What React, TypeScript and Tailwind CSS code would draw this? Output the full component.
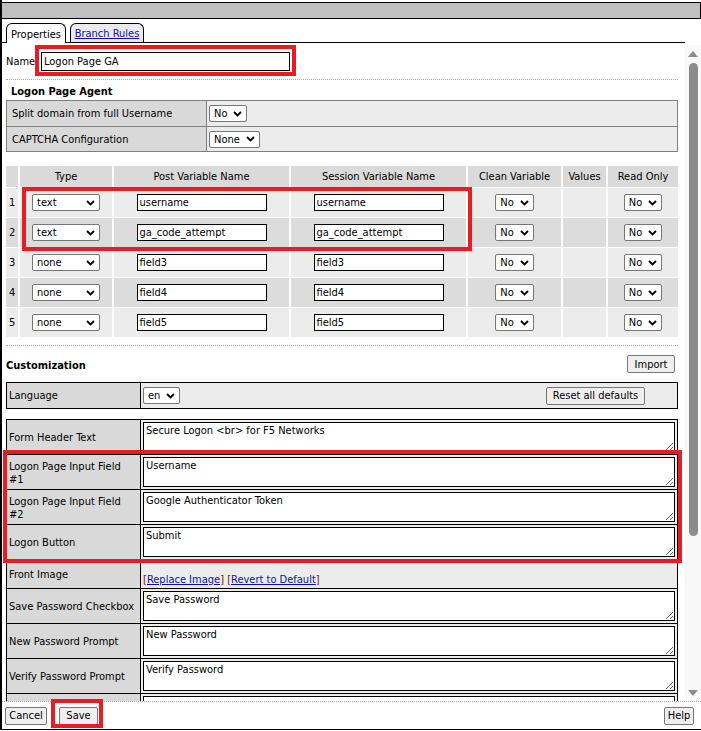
import React from 'react';

const Chevron = () => (
  <svg width="9" height="6" viewBox="0 0 9 6" className="shrink-0">
    <path d="M1 1 L4.5 4.5 L8 1" fill="none" stroke="#000" strokeWidth="1.8" />
  </svg>
);

function FakeSelect({ value, width = '' }: { value: string; width?: string }) {
  return (
    <div
      className={`flex h-[17px] items-center justify-between gap-[6px] rounded-[2px] border border-[#767676] bg-white pl-[4px] pr-[4px] ${width}`}
    >
      <span className="leading-none">{value}</span>
      <Chevron />
    </div>
  );
}

function Btn({ children, className = '' }: { children: React.ReactNode; className?: string }) {
  return (
    <button
      className={`flex h-[18px] items-center justify-center rounded-[2px] border border-[#767676] bg-[#efefef] leading-none ${className}`}
    >
      {children}
    </button>
  );
}

function TextBox({ value, width }: { value: string; width: string }) {
  return (
    <div className={`flex h-[17px] items-center border border-black bg-white px-[2px] ${width}`}>{value}</div>
  );
}

const varRows = [
  { type: 'text', post: 'username', session: 'username' },
  { type: 'text', post: 'ga_code_attempt', session: 'ga_code_attempt' },
  { type: 'none', post: 'field3', session: 'field3' },
  { type: 'none', post: 'field4', session: 'field4' },
  { type: 'none', post: 'field5', session: 'field5' },
];

const headers = ['', 'Type', 'Post Variable Name', 'Session Variable Name', 'Clean Variable', 'Values', 'Read Only'];

type CustRow = { label: React.ReactNode; value?: string; front?: boolean; h: string };

// last row is scrolled out of view, only its top edge shows
const custRows: CustRow[] = [
  { label: 'Form Header Text', value: 'Secure Logon <br> for F5 Networks', h: 'h-[35px]' },
  { label: <>Logon Page Input Field<br />#1</>, value: 'Username', h: 'h-[35px]' },
  { label: <>Logon Page Input Field<br />#2</>, value: 'Google Authenticator Token', h: 'h-[35px]' },
  { label: 'Logon Button', value: 'Submit', h: 'h-[35px]' },
  { label: 'Front Image', front: true, h: 'h-[29px]' },
  { label: 'Save Password Checkbox', value: 'Save Password', h: 'h-[35px]' },
  { label: 'New Password Prompt', value: 'New Password', h: 'h-[35px]' },
  { label: 'Verify Password Prompt', value: 'Verify Password', h: 'h-[35px]' },
  { label: '', value: '', h: 'h-[35px]' },
];

export default function App() {
  return (
    <div className="relative h-[730px] w-[701px] overflow-hidden border-b border-l-2 border-black bg-white text-[11px] leading-[13px] text-black [font-family:'DejaVu_Sans_Condensed','Liberation_Sans',sans-serif]">
      {/* title bar */}
      <div className="mt-[2px] h-[17px] border-y border-r border-black bg-[#c0c0c0]" />

      <div className="flex h-[682px]">
        <div className="flex w-[683px] flex-col">
          {/* tabs */}
          <div className="flex h-[24px] items-end border-b border-black pl-[4px]">
            <div className="-mb-px flex h-[20px] w-[60px] items-center justify-center rounded-t-[6px] border border-b-0 border-black bg-white pt-[1px]">
              Properties
            </div>
            <div className="ml-[4px] flex h-[19px] w-[74px] items-center justify-center rounded-t-[6px] border border-b-0 border-black bg-[#ebebeb] pt-[1px]">
              <span className="text-[#1010b0] underline">Branch Rules</span>
            </div>
          </div>

          <div className="h-[658px] overflow-hidden pl-[4px] pr-[7px]">
            {/* name */}
            <div className="mt-[2px] flex h-[31px] items-center">
              <span className="w-[29px] pt-[1px]">Name</span>
              <div className="flex h-[31px] w-[261px] items-center border-4 border-[#e81c24] px-[2px] pt-[1px]">
                <div className="flex h-[19px] w-full items-center border border-black bg-white px-[2px]">
                  Logon Page GA
                </div>
              </div>
            </div>

            <div className="mt-[3px] border-t border-dotted border-[#a8a8a8]" />
            <div className="flex h-[20px] items-center pl-[5px] pt-[2px] font-bold">Logon Page Agent</div>

            {/* agent settings */}
            <div className="border-x border-t border-[#808080]">
              <div className="grid h-[26px] grid-cols-[200px_1fr] border-b border-[#808080]">
                <div className="flex items-center border-r border-[#808080] bg-[#d9d9d9] pl-[5px]">
                  Split domain from full Username
                </div>
                <div className="flex items-center bg-[#ececec] pl-[2px]">
                  <FakeSelect value="No" />
                </div>
              </div>
              <div className="grid h-[25px] grid-cols-[200px_1fr] border-b border-[#808080]">
                <div className="flex items-center border-r border-[#808080] bg-[#d9d9d9] pl-[5px]">
                  CAPTCHA Configuration
                </div>
                <div className="flex items-center bg-[#ececec] pl-[2px]">
                  <FakeSelect value="None" />
                </div>
              </div>
            </div>

            {/* variables */}
            <div className="mt-[14px] grid grid-cols-[12px_92px_175px_175px_93px_43px_70px] gap-x-[2px] gap-y-[1px]">
              {headers.map((h, i) => (
                <div key={i} className="flex h-[21px] items-center justify-center bg-[#dadada]">
                  {h}
                </div>
              ))}
              {varRows.map((r, i) => {
                const bg = i % 2 === 0 ? 'bg-[#ececec]' : 'bg-[#dcdcdc]';
                return (
                  <React.Fragment key={i}>
                    <div className={`flex h-[29px] items-center pl-[3px] ${bg}`}>{i + 1}</div>
                    <div className={`flex items-center justify-center ${bg}`}>
                      <FakeSelect value={r.type} width="w-[68px]" />
                    </div>
                    <div className={`flex items-center justify-center ${bg}`}>
                      <TextBox value={r.post} width="w-[130px]" />
                    </div>
                    <div className={`flex items-center justify-center ${bg}`}>
                      <TextBox value={r.session} width="w-[130px]" />
                    </div>
                    <div className={`flex items-center justify-center ${bg}`}>
                      <FakeSelect value="No" />
                    </div>
                    <div className={bg} />
                    <div className={`flex items-center justify-center ${bg}`}>
                      <FakeSelect value="No" />
                    </div>
                  </React.Fragment>
                );
              })}
            </div>

            <div className="mt-[8px] border-t border-dotted border-[#a8a8a8]" />
            <div className="flex h-[36px] items-center justify-between pr-[3px]">
              <span className="pt-[3px] font-bold">Customization</span>
              <Btn className="w-[48px]">Import</Btn>
            </div>

            {/* language */}
            <div className="grid h-[27px] grid-cols-[134px_1fr] border border-black">
              <div className="flex items-center border-r border-black bg-[#d9d9d9] pl-[2px]">Language</div>
              <div className="flex items-center justify-between bg-[#ececec] pl-[2px] pr-[32px]">
                <FakeSelect value="en" />
                <Btn className="w-[99px]">Reset all defaults</Btn>
              </div>
            </div>

            {/* customization texts */}
            <div className="mt-[10px] border-x border-t border-black">
              {custRows.map((r, i) => (
                <div key={i} className={`grid grid-cols-[134px_1fr] border-b border-black ${r.h}`}>
                  <div className="flex items-center whitespace-nowrap border-r border-black bg-[#d9d9d9] px-[2px] pt-[1px]">
                    <span>{r.label}</span>
                  </div>
                  {r.front ? (
                    <div className="flex items-end bg-[#ececec] pb-[2px] pl-[2px]">
                      <span className="text-[#7a1010]">
                        [<span className="text-[#1010b0] underline">Replace Image</span>]{' '}
                        [<span className="text-[#1010b0] underline">Revert to Default</span>]
                      </span>
                    </div>
                  ) : (
                    <div className="bg-[#ececec] px-[2px] pt-[2px]">
                      <textarea
                        readOnly
                        defaultValue={r.value}
                        className="block h-[30px] w-full resize-y border border-black bg-white px-[2px] py-[1px] leading-[14px] outline-none"
                      />
                    </div>
                  )}
                </div>
              ))}
            </div>
          </div>
        </div>

        {/* scrollbar */}
        <div className="mt-[26px] flex w-[16px] flex-col bg-[#f8f8f8]">
          <svg width="10" height="6" viewBox="0 0 10 6" className="mx-auto mt-[6px]">
            <path d="M0 6 L5 0 L10 6 Z" fill="#8c8c8c" />
          </svg>
          <div className="mx-auto mt-[6px] h-[473px] w-[9px] rounded-full bg-[#8c8c8c]" />
          <svg width="10" height="6" viewBox="0 0 10 6" className="mx-auto mb-[5px] mt-auto">
            <path d="M0 0 L10 0 L5 6 Z" fill="#8c8c8c" />
          </svg>
        </div>
      </div>

      {/* footer */}
      <div className="flex h-[28px] items-center border-t border-dotted border-[#a8a8a8] pr-[7px]">
        <Btn className="ml-[3px] w-[42px]">Cancel</Btn>
        <Btn className="ml-[12px] w-[39px]">Save</Btn>
        <Btn className="ml-auto w-[30px]">Help</Btn>
      </div>

      {/* highlight boxes */}
      <div className="pointer-events-none absolute left-[20px] top-[187px] h-[64px] w-[450px] border-4 border-[#e81c24]" />
      <div className="pointer-events-none absolute left-[1px] top-[450px] h-[113px] w-[679px] border-4 border-[#e81c24]" />
      <div className="pointer-events-none absolute left-[49px] top-[699px] h-[29px] w-[52px] border-4 border-[#e81c24]" />
    </div>
  );
}
